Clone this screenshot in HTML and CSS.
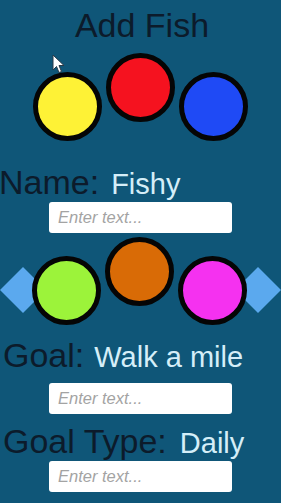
FILE: index.html
```html
<!DOCTYPE html>
<html lang="en">
<head>
    <meta charset="UTF-8">
    <meta name="viewport" content="width=device-width, initial-scale=1.0">
    <title>Add Fish</title>
    <link rel="stylesheet" href="styles.css">
</head>
<body>
    <main class="screen">
        <h1 class="title">Add Fish</h1>

        <div class="color-row">
            <div class="swatch yellow low"></div>
            <div class="swatch red"></div>
            <div class="swatch blue low"></div>
        </div>

        <div class="field-row name-row">
            <span class="label">Name:</span>
            <span class="value">Fishy</span>
        </div>
        <input class="text-input" type="text" placeholder="Enter text...">

        <div class="color-row picker">
            <svg class="arrow" width="46" height="46" viewBox="0 0 46 46"><polygon points="0,23 23,0 46,23 23,46" fill="#5ba9ee"/></svg>
            <div class="swatch green low"></div>
            <div class="swatch orange"></div>
            <div class="swatch pink low"></div>
            <svg class="arrow" width="46" height="46" viewBox="0 0 46 46"><polygon points="0,23 23,0 46,23 23,46" fill="#5ba9ee"/></svg>
        </div>

        <div class="field-row goal-row">
            <span class="label">Goal:</span>
            <span class="value">Walk a mile</span>
        </div>
        <input class="text-input" type="text" placeholder="Enter text...">

        <div class="field-row type-row">
            <span class="label">Goal Type:</span>
            <span class="value">Daily</span>
        </div>
        <input class="text-input" type="text" placeholder="Enter text...">

        <svg class="cursor" width="14" height="20" viewBox="0 0 14 20">
            <path d="M1 1 L1 16 L4.5 12.5 L7 18.5 L9.5 17.5 L7 11.5 L12 11.5 Z" fill="#fff" stroke="#2a3a48" stroke-width="1"/>
        </svg>
    </main>
</body>
</html>
```

FILE: styles.css
```css
* { margin: 0; padding: 0; box-sizing: border-box; }
body { background: #0f5678; font-family: "Liberation Sans", Arial, sans-serif; overflow: hidden; }

.screen { position: relative; width: 281px; height: 503px; padding-top: 9px; }

.title { font-size: 34px; line-height: 32px; font-weight: normal; color: #0c1b2b; text-align: center; margin-left: 3px; }

.color-row { display: flex; justify-content: center; align-items: flex-start; margin-top: 12px; height: 87px; }
.swatch { width: 69px; height: 69px; border: 5px solid #050505; border-radius: 50%; position: relative; z-index: 1; }
.swatch + .swatch { margin-left: 4px; }
.swatch.low { margin-top: 19px; }
.yellow { background: #fef236; }
.red { background: #f5121f; }
.blue { background: #1f4af5; }
.green { background: #9cf33a; }
.orange { background: #d96b06; }
.pink { background: #f531f0; }

.picker { margin-top: 4px; height: 86px; justify-content: flex-start; }
.arrow { flex: none; margin-top: 30px; }
.picker .arrow:first-child { margin-right: -14px; }
.picker .arrow:last-child { margin-left: -12px; }

.field-row { display: flex; align-items: baseline; gap: 12px; height: 32px; line-height: 32px; }
.label { font-size: 34px; color: #0c1b2b; }
.value { font-size: 29px; color: #d5eef8; }
.name-row { margin-top: 26px; margin-left: -1px; }
.goal-row { margin-top: 16px; margin-left: 3px; gap: 10px; }
.type-row { margin-top: 11px; margin-left: 3px; gap: 13px; }

.text-input { display: block; width: 183px; height: 31px; margin: 4px 0 0 49px; border: none; border-radius: 3px; background: #fff; padding: 0 9px; font-family: "Liberation Sans", Arial, sans-serif; font-size: 16.5px; font-style: italic; outline: none; }
.text-input::placeholder { color: #a3a3a3; }
.goal-row + .text-input { margin-top: 12px; }

.cursor { position: absolute; left: 52px; top: 54px; }
```
